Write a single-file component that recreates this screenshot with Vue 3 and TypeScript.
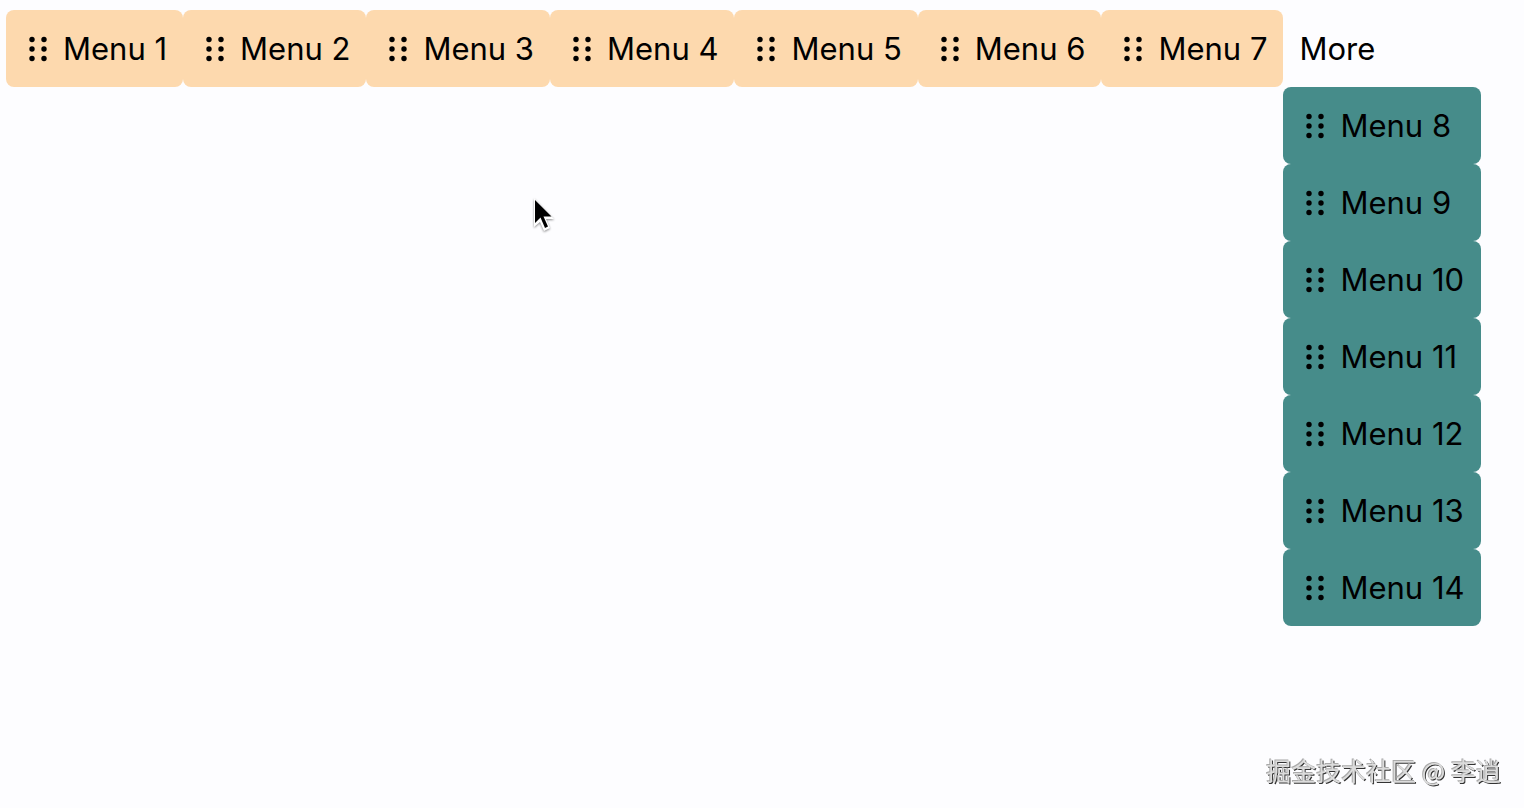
<script setup lang="ts">
import { ref } from 'vue'

interface MenuItem {
  id: number
  label: string
}

const visibleCount = 7
const menus: MenuItem[] = Array.from({ length: 14 }, (_, i) => ({
  id: i + 1,
  label: `Menu ${i + 1}`,
}))
const bar = menus.slice(0, visibleCount)
const overflow = menus.slice(visibleCount)

const open = ref(true)
const dots = [
  [10, 6.5],
  [22, 6.5],
  [10, 16],
  [22, 16],
  [10, 25.5],
  [22, 25.5],
]
</script>

<template>
  <main class="page">
    <nav class="bar" aria-label="Main menu">
      <ul class="list">
        <li v-for="item in bar" :key="item.id">
          <button type="button" class="item">
            <svg class="grip" viewBox="0 0 32 32" aria-hidden="true">
              <circle v-for="(d, i) in dots" :key="i" :cx="d[0]" :cy="d[1]" r="2.7" />
            </svg>
            <span>{{ item.label }}</span>
          </button>
        </li>
      </ul>
      <div class="more">
        <button type="button" class="more-button" :aria-expanded="open" @click="open = !open">More</button>
        <ul v-if="open" class="list dropdown">
          <li v-for="item in overflow" :key="item.id">
            <button type="button" class="item item-teal">
              <svg class="grip" viewBox="0 0 32 32" aria-hidden="true">
                <circle v-for="(d, i) in dots" :key="i" :cx="d[0]" :cy="d[1]" r="2.7" />
              </svg>
              <span>{{ item.label }}</span>
            </button>
          </li>
        </ul>
      </div>
    </nav>

    <svg class="cursor" viewBox="0 0 28 40" aria-hidden="true">
      <path class="cursor-edge" d="M4 3V32L10 27L14 36L20 33L16 24H24Z" />
      <path d="M5 5V28L10.500 22.500L15 33L18 31.500L13.500 21.500H21.500Z" />
    </svg>

    <footer class="credit">掘金技术社区 @ 李逍</footer>
  </main>
</template>

<style>
body {
  background: #fdfdff;
}
</style>

<style scoped>
.page {
  min-height: 100vh;
  box-sizing: border-box;
  padding: 10px 6px;
  color: #000;
  font-family: Inter, "Liberation Sans", sans-serif;
  font-size: 31px;
  line-height: 45px;
}

.bar {
  display: flex;
}

.list {
  display: flex;
  margin: 0;
  padding: 0;
  list-style: none;
}

.item,
.more-button {
  display: flex;
  align-items: center;
  border: 0;
  padding: 16px;
  color: inherit;
  font: inherit;
  white-space: nowrap;
  cursor: pointer;
}

.item {
  gap: 9px;
  width: 100%;
  border-radius: 8px;
  background: #fdd9ae;
}

.item-teal {
  background: #468c8a;
}

.more-button {
  background: none;
}

.grip {
  flex: none;
  width: 32px;
  height: 32px;
}

.more {
  position: relative;
}

.dropdown {
  position: absolute;
  top: 100%;
  left: 0;
  flex-direction: column;
}

.cursor {
  position: fixed;
  top: 195px;
  left: 530px;
  width: 28px;
  height: 40px;
  pointer-events: none;
}

.cursor-edge {
  fill: #fff;
  filter: drop-shadow(0 1px 1px rgba(0, 0, 0, 0.45));
}

.credit {
  position: fixed;
  right: 23px;
  bottom: 20px;
  color: #dcdcdc;
  font-family: "Noto Sans CJK SC", sans-serif;
  font-size: 25px;
  line-height: 36px;
  text-shadow: -1px -1px 0 #aaa, 1px 1px 0 #333;
}
</style>
